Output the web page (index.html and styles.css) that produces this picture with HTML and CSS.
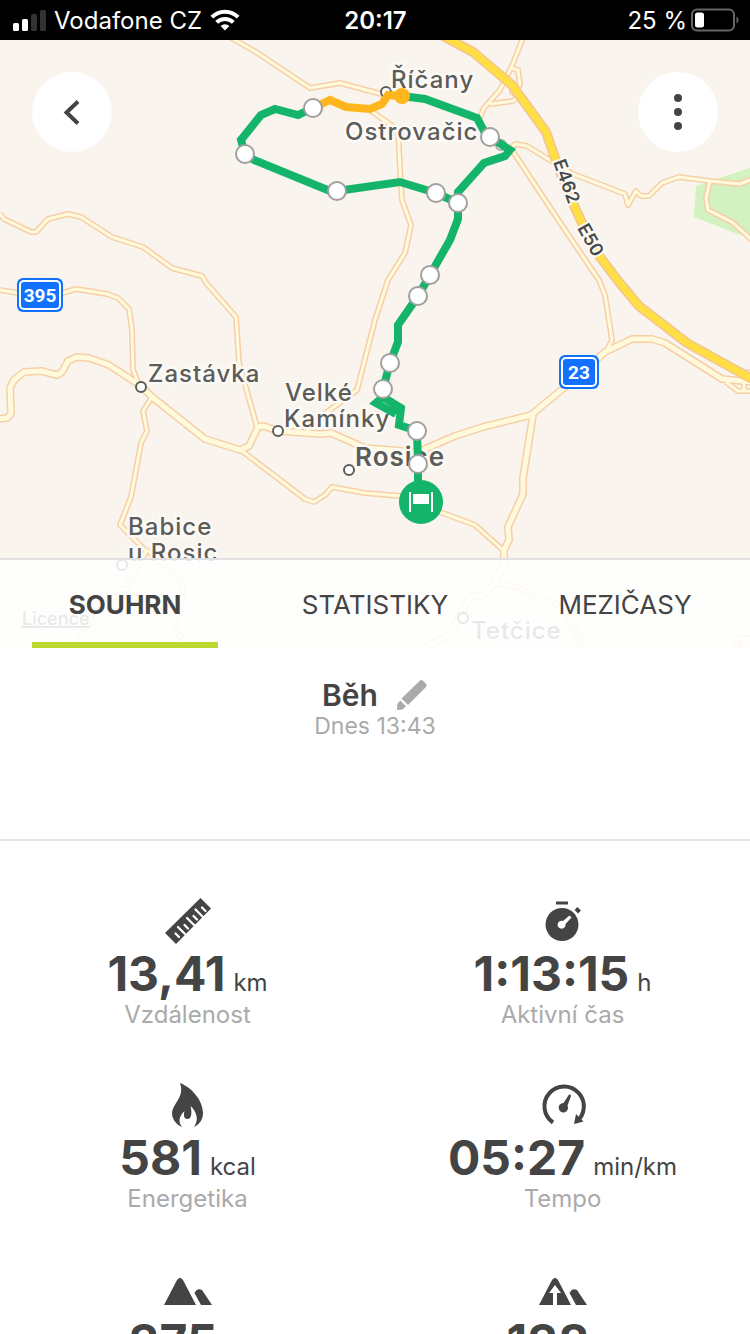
FILE: index.html
```html
<!DOCTYPE html>
<html lang="cs">
<head>
  <meta charset="UTF-8">
  <meta name="viewport" content="width=device-width, initial-scale=1.0">
  <title>Běh</title>
  <link rel="stylesheet" href="styles.css">
</head>
<body>
  <header class="status-bar">
    <div class="carrier">
      <svg width="34" height="22" viewBox="0 0 34 22">
        <rect x="1" y="14" width="6" height="8" rx="1.5" fill="#fff"/>
        <rect x="10" y="10" width="6" height="12" rx="1.5" fill="#fff"/>
        <rect x="19" y="5" width="6" height="17" rx="1.5" fill="#333"/>
        <rect x="28" y="1" width="6" height="21" rx="1.5" fill="#333"/>
      </svg>
      <span>Vodafone CZ</span>
      <svg width="30" height="22" viewBox="0 0 30 22" fill="none" stroke="#fff" stroke-width="4">
        <path d="M1.9 8.2a18.5 18.5 0 0 1 26.2 0"/>
        <path d="M6.7 13.3a11.8 11.8 0 0 1 16.6 0"/>
        <path d="M15 21.5l-4.4-4.5a6.2 6.2 0 0 1 8.8 0z" fill="#fff" stroke="none"/>
      </svg>
    </div>
    <time class="clock">20:17</time>
    <div class="battery">
      <span>25 %</span>
      <svg width="48" height="24" viewBox="0 0 48 24">
        <rect x="1" y="1.5" width="42" height="21" rx="5" fill="none" stroke="#666" stroke-width="2"/>
        <rect x="4" y="4.5" width="9" height="15" rx="2.5" fill="#fff"/>
        <path d="M45.500 8.500a4 4 0 0 1 0 7z" fill="#666"/>
      </svg>
    </div>
  </header>

  <main class="content">
    <section class="map-section">
      <svg class="map" viewBox="0 40 750 608" preserveAspectRatio="xMidYMid slice">
        <defs>
          <g id="minor-roads">
            <path d="M228 36L256 52L310 88L340 83L385 95L405 98"/>
            <path d="M0 214L4 219L31 232L36 232L48 219L68 214L81 217L112 237L143 247L172 268L202 276L207 284L236 317L239 363L257 427"/>
            <path d="M0 290L18 293L62 293L76 289L107 294L118 298L129 309L132 330L133 370L140 387"/>
            <path d="M152 397L143 411L147 431L141 443L131 497L120 525L147 552"/>
            <path d="M147 550L125 588L100 598L85 630L75 650"/>
            <path d="M125 588L140 601L165 614L175 622L177 632L190 650"/>
            <path d="M147 550L160 562L183 586L182 598L175 620"/>
            <path d="M242 451L305 499L314 502L325 495L332 487L365 493L400 496L440 512L475 525L503 550"/>
            <path d="M370 110L398 130L401 187L402 200L411 225L405 253L388 280L375 320L357 390L327 412L312 422L307 432"/>
            <path d="M523 38L512 66L500 90L484 108L479 120"/>
            <path d="M510 68L518 70L520 85L512 92L518 97L513 101L490 104"/>
            <path d="M512 147L515 144L527 146L553 162L573 174L620 192L625 194L628 205L636 191L641 196L649 196L662 183L679 177L710 181L740 184L752 179"/>
            <path d="M512 150L555 215L590 267L599 280L605 295L612 340L606 352"/>
            <path d="M710 181L706 198L708 210L732 222L752 240"/>
            <path d="M742 373L752 372M726 382L738 391L752 391M744 383V391"/>
            <path d="M495 583L518 587L530 594L555 603L565 612L578 635L583 650M735 650L738 638L752 638M744 638V650"/>
          </g>
          <g id="major-roads">
            <path d="M-2 419L7 418L11 414L10 388L14 380L24 372L41 371L57 375L62 372L68 361L77 357L89 358L109 365L141 386L152 397L205 439L240 450L249 446L258 427L264 426L278 431L320 434L331 433L365 448L418 452L455 436L483 427L531 415L565 387L605 352L632 339L652 339L665 343L722 379L752 382"/>
            <path d="M533 415L523 478L523 494L508 527L509 540L504 550L504 563L495 583L482 596L470 597L455 625L448 635L422 650"/>
          </g>
          <path id="motorway" d="M443 36L473 52L512 85L546 132L560 172L575 208L584 227L600 257L619 282L639 306L687 343L752 379"/>
        </defs>

        <rect x="-1000" y="40" width="3000" height="608" fill="#f9f5ee"/>
        <path d="M752 167L696 186L694 217L735 233L752 238Z" fill="#d2f2c0"/>

        <!-- casings first, so that junctions stay open -->
        <use href="#minor-roads" class="road casing-minor"/>
        <use href="#major-roads" class="road casing-major"/>
        <use href="#minor-roads" class="road fill-minor"/>
        <use href="#major-roads" class="road fill-major"/>
        <use href="#motorway" class="road casing-motorway"/>
        <use href="#motorway" class="road fill-motorway"/>

        <g class="town-dots">
          <circle cx="386" cy="92" r="5"/>
          <circle cx="501" cy="145" r="5" stroke="#aaa"/>
          <circle cx="141" cy="387" r="5"/>
          <circle cx="278" cy="431" r="5"/>
          <circle cx="349" cy="470" r="5"/>
          <circle cx="122" cy="565" r="5"/>
          <circle cx="463" cy="618" r="5"/>
        </g>

        <g class="map-labels">
          <text x="391" y="88">Říčany</text>
          <text x="345" y="140">Ostrovačic</text>
          <text x="148" y="382">Zastávka</text>
          <text x="285" y="401">Velké</text>
          <text x="284" y="427">Kamínky</text>
          <text x="355" y="466" class="town-large">Rosice</text>
          <text x="128" y="535">Babice</text>
          <text x="128" y="561">u Rosic</text>
          <text x="471" y="639">Tetčice</text>
          <a href="#licence"><text x="22" y="625" class="licence">Licence</text></a>
        </g>

        <g class="motorway-labels">
          <text transform="translate(553 162) rotate(70)">E462</text>
          <text transform="translate(577 228) rotate(61)">E50</text>
        </g>

        <g class="road-badges">
          <rect x="17" y="278" width="46" height="34" rx="6"/>
          <rect x="20" y="281" width="40" height="28" rx="4" class="badge-line"/>
          <text x="40" y="302">395</text>
          <rect x="559" y="355" width="40" height="34" rx="6"/>
          <rect x="562" y="358" width="34" height="28" rx="4" class="badge-line"/>
          <text x="579" y="379">23</text>
        </g>

        <path class="track" d="M418 482L418 464L417 431L399 425L401 408L383 397L376 403L396 414M383 399L383 389L390 363L398 342L398 325L418 296L430 275L450 240L458 219L458 192L484 163L505 156L510 150L490 137L484 131L477 118L425 99L402 96"/>
        <path class="track" d="M458 203L436 193L400 182L337 191L330 191L254 160L245 154L241 140L261 115L275 109L298 115L313 108"/>
        <path class="track track-fast" d="M313 108L330 100L346 107L370 109L382 104L388 95L402 96"/>

        <g class="km-markers">
          <circle cx="313" cy="108" r="9"/>
          <circle cx="245" cy="154" r="9"/>
          <circle cx="337" cy="191" r="9"/>
          <circle cx="436" cy="193" r="9"/>
          <circle cx="458" cy="203" r="9"/>
          <circle cx="490" cy="137" r="9"/>
          <circle cx="430" cy="275" r="9"/>
          <circle cx="418" cy="296" r="9"/>
          <circle cx="390" cy="363" r="9"/>
          <circle cx="383" cy="389" r="9"/>
          <circle cx="417" cy="431" r="9"/>
          <circle cx="418" cy="464" r="9"/>
        </g>
        <circle cx="402" cy="96" r="8" fill="#ffb61c"/>
        <circle cx="421" cy="502" r="22" fill="#14b56a"/>
        <path d="M409 492h2v20h-2zM431 492h2v20h-2zM413 494h16v10h-16z" fill="#fff"/>
      </svg>

      <div class="map-actions">
        <button class="round-btn" aria-label="Zpět">
          <svg width="80" height="80" viewBox="0 0 80 80" fill="none" stroke="#444" stroke-width="4">
            <path d="M46 29.500L34.500 40.500L46 51.500"/>
          </svg>
        </button>
        <button class="round-btn" aria-label="Více">
          <svg width="80" height="80" viewBox="0 0 80 80" fill="#444">
            <circle cx="40" cy="26" r="4"/>
            <circle cx="40" cy="40" r="4"/>
            <circle cx="40" cy="54" r="4"/>
          </svg>
        </button>
      </div>

      <nav class="tabs">
        <button class="tab active">SOUHRN</button>
        <button class="tab">STATISTIKY</button>
        <button class="tab">MEZIČASY</button>
      </nav>
    </section>

    <section class="activity">
      <div class="activity-title">
        <h1>Běh</h1>
        <button class="edit-btn" aria-label="Upravit">
          <svg width="32" height="32" viewBox="0 0 32 32" fill="#aaa">
            <path d="M23.800 1.800q1.600-1.600 3.200 0l3 3q1.600 1.600 0 3.200L12 26L5.500 19.500Z"/>
            <path d="M4.300 21.500L10 27.200L6.500 30.500L1 31L1.300 25Z"/>
          </svg>
        </button>
      </div>
      <p>Dnes 13:43</p>
    </section>

    <section class="stats">
      <div class="stat">
        <svg width="48" height="48" viewBox="0 0 48 48">
          <path d="M36.500 2L47 12.500L12 48L1 37Z" fill="#444"/>
          <path d="M11.500 37.500l3.500 3.500M14 31l7 7M20.500 29l3.500 3.500M23 22l7 7M29.500 20l3.500 3.500M31.500 13.500l7 7M38 11.500l3.500 3.500" stroke="#fff" stroke-width="2.300" stroke-linecap="round"/>
        </svg>
        <div class="value">13,41 <span>km</span></div>
        <div class="label">Vzdálenost</div>
      </div>
      <div class="stat">
        <svg width="48" height="48" viewBox="0 0 48 48">
          <circle cx="23" cy="28.500" r="16.500" fill="#444"/>
          <path d="M17 5.500h12v3H17z" fill="#444"/>
          <path d="M37 12.500l3.500 3.500" stroke="#444" stroke-width="4"/>
          <path d="M24 25L30.500 19.500L32.500 21.500L26.500 28A4 4 0 1 1 24 25Z" fill="#fff"/>
        </svg>
        <div class="value">1:13:15 <span>h</span></div>
        <div class="label">Aktivní čas</div>
      </div>
      <div class="stat">
        <svg width="48" height="48" viewBox="0 0 48 48">
          <path d="M16 3C27 7 39 20 39 33C39 39 36 44 30 47C35 40 33 32 26.500 26C28 32 28 39 23.500 39C19.500 39 19.500 35 20.500 31C15 36 14 42 18 47C11 44 8 38 8 33C9 23 21 17 16 3Z" fill="#444"/>
        </svg>
        <div class="value">581 <span>kcal</span></div>
        <div class="label">Energetika</div>
      </div>
      <div class="stat">
        <svg width="48" height="48" viewBox="0 0 48 48">
          <path d="M14 42.500A19.700 19.700 0 1 1 37 42" fill="none" stroke="#444" stroke-width="4"/>
          <path d="M37 34L44.500 41.500L35 44Z" fill="#444"/>
          <path d="M24.500 23L30 14.500Q32 14 32 16L28.500 25.500A4.700 4.700 0 1 1 24.500 23Z" fill="#444"/>
        </svg>
        <div class="value">05:27 <span>min/km</span></div>
        <div class="label">Tempo</div>
      </div>
      <div class="stat">
        <svg width="48" height="48" viewBox="0 0 48 48">
          <path d="M0 41L13 16Q16 12 19 16L32 41Z" fill="#444"/>
          <path d="M37 41L30.500 29Q33 23.500 38 26L48 41Z" fill="#444"/>
        </svg>
        <div class="value">375 <span>m</span></div>
      </div>
      <div class="stat">
        <svg width="48" height="48" viewBox="0 0 48 48">
          <path d="M0 41L13 16Q16 12 19 16L32 41Z" fill="#444"/>
          <path d="M37 41L30.500 29Q33 23.500 38 26L48 41Z" fill="#444"/>
          <path d="M14 41V29H10L16 21L22 29H18V41Z" fill="#fff"/>
        </svg>
        <div class="value">138 <span>m</span></div>
      </div>
    </section>
  </main>
</body>
</html>
```

FILE: styles.css
```css
* {
  box-sizing: border-box;
}
body {
  display: flex;
  flex-direction: column;
  height: 100vh;
  margin: 0;
  background: #fff;
  color: #444;
  font-family: Inter, 'Liberation Sans', sans-serif;
}
button {
  padding: 0;
  border: none;
  background: none;
  color: inherit;
  font: inherit;
  cursor: pointer;
}
svg {
  display: block;
}

/* Status bar */
.status-bar {
  display: grid;
  grid-template-columns: 1fr auto 1fr;
  align-items: center;
  flex: none;
  height: 40px;
  padding: 0 11px 0 12px;
  background: #000;
  color: #fff;
  font-size: 24px;
}
.carrier,
.battery {
  display: flex;
  align-items: center;
}
.carrier svg,
.battery svg {
  flex: none;
}
.carrier {
  gap: 8px;
}
.battery {
  justify-content: flex-end;
  gap: 4px;
}
.clock {
  font-weight: 600;
}
.content {
  flex: 1;
  min-height: 0;
  overflow-y: auto;
  scrollbar-width: none;
}

/* Map */
.map-section {
  position: relative;
}
.map {
  width: 100%;
  height: 608px;
}
.road {
  fill: none;
  stroke-linejoin: round;
}
.casing-minor {
  stroke: #f6cfa8;
  stroke-width: 6px;
}
.fill-minor {
  stroke: #fffadb;
  stroke-width: 3px;
}
.casing-major {
  stroke: #f6cfa8;
  stroke-width: 8px;
}
.fill-major {
  stroke: #fffadb;
  stroke-width: 5px;
}
.casing-motorway {
  stroke: #f5c391;
  stroke-width: 10px;
}
.fill-motorway {
  stroke: #ffdf43;
  stroke-width: 7px;
}
.town-dots {
  fill: #fff;
  stroke: #5c5c58;
  stroke-width: 2px;
}
.map-labels {
  fill: #5c5c58;
  stroke: #fcfaf6;
  stroke-width: 5px;
  stroke-linejoin: round;
  paint-order: stroke;
  font-size: 24px;
  font-weight: 500;
  letter-spacing: 1px;
}
.town-large {
  font-size: 26px;
  font-weight: 600;
}
.licence {
  stroke: none;
  font-size: 18px;
  letter-spacing: 0;
  text-decoration: underline;
  text-decoration-thickness: 2px;
}
.motorway-labels {
  fill: #4a4a4a;
  stroke: #fcfaf6;
  stroke-width: 4px;
  stroke-linejoin: round;
  paint-order: stroke;
  font-size: 18px;
  font-weight: 600;
}
.road-badges {
  fill: #1272ff;
}
.road-badges .badge-line {
  stroke: #fff;
  stroke-width: 2px;
}
.road-badges text {
  fill: #fff;
  font-family: Roboto, 'Liberation Sans', sans-serif;
  font-size: 19px;
  font-weight: 700;
  text-anchor: middle;
}
.track {
  fill: none;
  stroke: #14b56a;
  stroke-width: 8px;
}
.track-fast {
  stroke: #ffb61c;
}
.km-markers {
  fill: #fff;
  stroke: #9f9f9f;
  stroke-width: 2px;
}
.map-actions {
  position: absolute;
  top: 32px;
  left: 32px;
  right: 32px;
  display: flex;
  justify-content: space-between;
}
.round-btn {
  width: 80px;
  height: 80px;
  border-radius: 50%;
  background: #fff;
}

/* Tabs lie over the lower edge of the map */
.tabs {
  position: absolute;
  left: 0;
  right: 0;
  bottom: 0;
  display: flex;
  gap: 64px;
  height: 90px;
  padding: 0 32px;
  border-top: 2px solid #e0e0e0;
  background: rgba(255, 255, 255, 0.86);
}
.tab {
  flex: 1 1 0;
  border-top: 6px solid transparent;
  border-bottom: 6px solid transparent;
  font-size: 26px;
}
.tab.active {
  border-bottom-color: #bdd730;
  font-weight: 700;
}

/* Activity title */
.activity {
  height: 193px;
  padding-top: 30px;
  border-bottom: 2px solid #e4e4e4;
  text-align: center;
}
.activity-title {
  display: flex;
  justify-content: center;
  align-items: center;
  gap: 18px;
  height: 34px;
}
.activity h1 {
  margin: 0;
  font-size: 30px;
  font-weight: 600;
}
.activity p {
  margin: 0;
  color: #aaa;
  font-size: 23px;
  line-height: 28px;
}

/* Stats */
.stats {
  display: grid;
  grid-template-columns: 1fr 1fr;
  row-gap: 54px;
  padding: 55px 0;
}
.stat {
  display: flex;
  flex-direction: column;
  align-items: center;
}
.value {
  display: flex;
  align-items: baseline;
  gap: 8px;
  font-size: 48px;
  font-weight: 700;
  line-height: 60px;
}
.value span {
  font-size: 24px;
  font-weight: 400;
  line-height: 24px;
}
.label {
  color: #aaa;
  font-size: 24px;
  line-height: 22px;
}
```
